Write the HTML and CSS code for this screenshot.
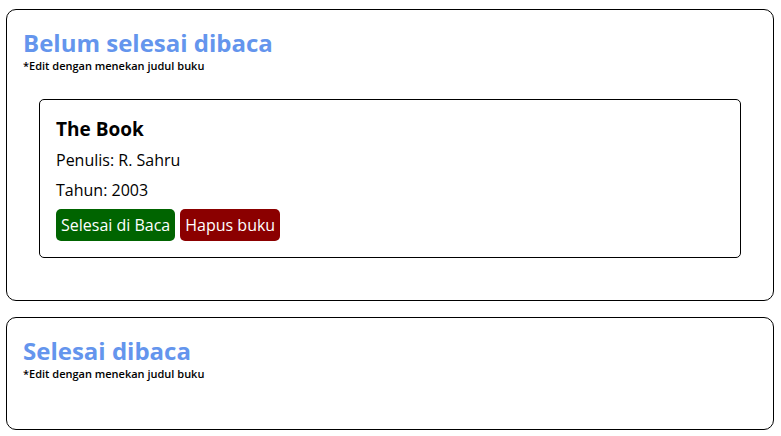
FILE: index.html
```html
<!DOCTYPE html>
<html lang="id">
<head>
<meta charset="utf-8">
<title>Rak Buku</title>
<link rel="stylesheet" href="styles.css">
</head>
<body>
<main>
  <section class="shelf">
    <h2>Belum selesai dibaca</h2>
    <h6>*Edit dengan menekan judul buku</h6>
    <div class="book-list">
      <article class="book">
        <h3>The Book</h3>
        <p>Penulis: R. Sahru</p>
        <p>Tahun: 2003</p>
        <div class="actions">
          <button type="button" class="done">Selesai di Baca</button>
          <button type="button" class="remove">Hapus buku</button>
        </div>
      </article>
    </div>
  </section>
  <section class="shelf">
    <h2>Selesai dibaca</h2>
    <h6>*Edit dengan menekan judul buku</h6>
    <div class="book-list"></div>
  </section>
</main>
</body>
</html>
```
FILE: styles.css
```css
* {
  box-sizing: border-box;
  margin: 0;
  padding: 0;
}

body {
  font-family: "Open Sans", sans-serif;
  font-size: 16px;
  color: #000;
  background: #fff;
}

main {
  display: flex;
  flex-direction: column;
  gap: 16px;
  padding: 9px 7px 6px 6px;
}

.shelf {
  padding: 16px;
  border: 1px solid #000;
  border-radius: 10px;
}

h2 {
  font-size: 24px;
  line-height: 33px;
  color: cornflowerblue;
}

h6 {
  font-size: 11px;
  font-weight: 600;
  line-height: 14px;
}

.book-list {
  padding: 16px;
  min-height: 32px;
}

.book {
  margin: 10px 0;
  padding: 16px;
  border: 1px solid #000;
  border-radius: 5px;
}

h3 {
  margin-bottom: 6px;
  font-size: 19px;
  font-weight: 700;
  line-height: 27px;
}

.book p {
  margin-bottom: 8px;
  line-height: 22px;
}

.actions {
  display: flex;
  gap: 5px;
}

button {
  padding: 5px;
  border: 0;
  border-radius: 5px;
  font: inherit;
  line-height: 22px;
  color: #fff;
  cursor: pointer;
}

.done {
  background: darkgreen;
}

.remove {
  background: darkred;
}
```
